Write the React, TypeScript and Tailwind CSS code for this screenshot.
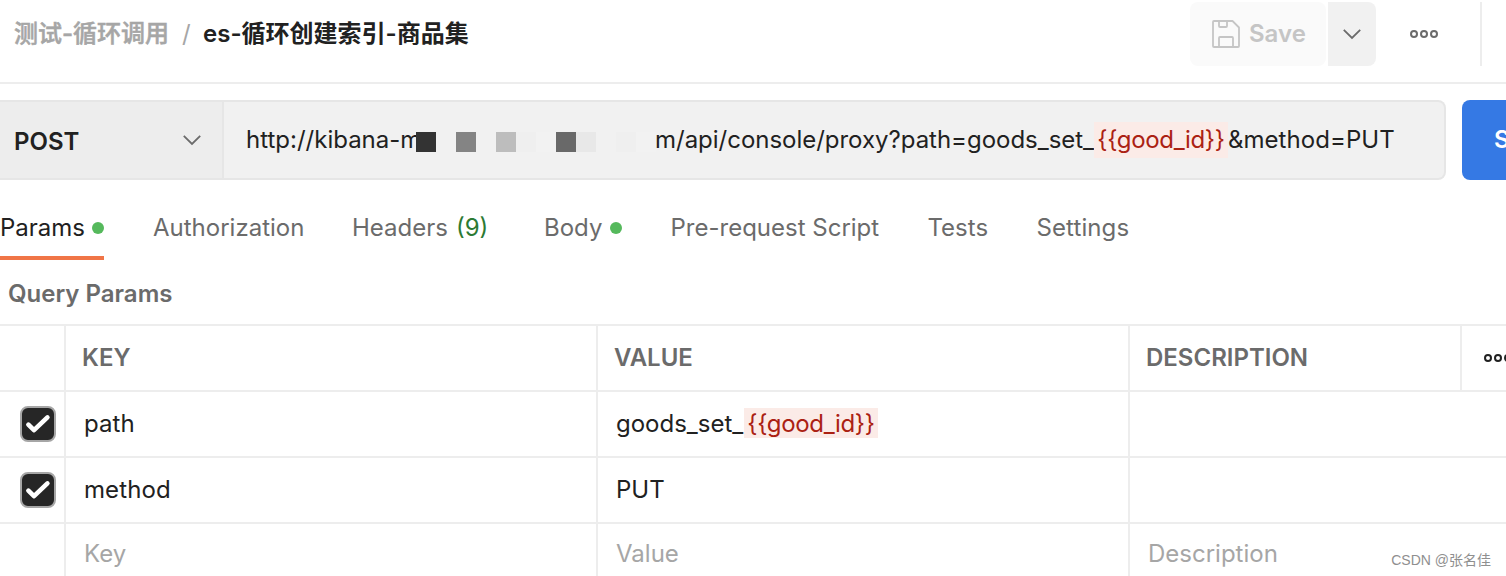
import clsx from 'clsx';

const tabs = [
  { label: 'Params', dot: true, active: true, className: 'w-[104px] mr-[49px]' },
  { label: 'Authorization', className: 'w-[151px] mr-[48px]' },
  { label: 'Headers', count: '(9)', className: 'w-[136px] mr-[56px]' },
  { label: 'Body', dot: true, className: 'w-[78px] mr-[48.5px]' },
  { label: 'Pre-request Script', className: 'w-[209px] mr-[48px]' },
  { label: 'Tests', className: 'w-[60px] mr-[49px]' },
  { label: 'Settings', className: 'w-[94px] tracking-[0.1px]' },
];

const maskedHost = [
  'bg-[#333333]', 'bg-[#f1f1f1]', 'bg-[#848484]', 'bg-[#f1f1f1]', 'bg-[#bdbdbd]', 'bg-[#efefef]',
  'bg-[#f2f2f2]', 'bg-[#696969]', 'bg-[#e8e8e8]', 'bg-[#f1f1f1]', 'bg-[#efefef]', 'bg-[#f2f2f2]',
];

function ChevronDown() {
  return (
    <svg width="20" height="12" viewBox="0 0 20 12" fill="none" stroke="#6b6b6b" strokeWidth="1.8">
      <path d="M1.8 1.8 10 10l8.2-8.2" />
    </svg>
  );
}

function Dots({ color }: { color: string }) {
  return (
    <svg className="shrink-0" width="28" height="8" viewBox="0 0 28 8" fill="none" stroke={color} strokeWidth="2">
      <circle cx="4" cy="4" r="3" />
      <circle cx="14" cy="4" r="3" />
      <circle cx="24" cy="4" r="3" />
    </svg>
  );
}

function SaveIcon() {
  return (
    <svg width="28" height="28" viewBox="0 0 28 28" fill="none" stroke="#c5c5c5" strokeWidth="1.8" strokeLinejoin="round">
      <path d="M2 1h18.5L27 7.5V26a1 1 0 0 1-1 1H2a1 1 0 0 1-1-1V2a1 1 0 0 1 1-1Z" />
      <path d="M7 1v5a1 1 0 0 0 1 1h6a1 1 0 0 0 1-1V1" />
      <path d="M7 27v-9a1 1 0 0 1 1-1h12a1 1 0 0 1 1 1v9" />
    </svg>
  );
}

function Checkbox() {
  return (
    <div className="ml-5 flex h-9 w-9 items-center justify-center rounded-[8px] border-2 border-[#a6a6a6] bg-[#262626]">
      <svg width="28" height="28" viewBox="0 0 28 28" fill="none" stroke="#fff" strokeWidth="4.6" strokeLinecap="round" strokeLinejoin="round">
        <path d="M4.4 14.6 10 20.2 23.4 7.4" />
      </svg>
    </div>
  );
}

function Row({ name, children }: { name: string, children: any }) {
  return (
    <div className="grid h-[66px] grid-cols-[66px_532px_532px_1fr] border-b-2 border-[#ededed]">
      <div className="flex items-center border-r-2 border-[#ededed]"><Checkbox /></div>
      <div className="flex items-center border-r-2 border-[#ededed] pl-[18px] tracking-[0.1px]">{name}</div>
      <div className="flex items-center border-r-2 border-[#ededed] pl-[18px]">{children}</div>
      <div />
    </div>
  );
}

export default function App() {
  return (
    <div className="relative flex h-[576px] w-[1506px] flex-col overflow-hidden bg-white font-['Inter','Noto_Sans_CJK_SC',sans-serif] text-[24px] leading-[36px] whitespace-pre text-[#212121]">
      <header className="flex h-[84px] shrink-0 items-start border-b-2 border-[#ededed] pl-[14px]">
        <div className="flex h-[68px] flex-1 items-center font-medium">
          <span className="w-[168px] text-[#a6a6a6] [-webkit-text-stroke:0.5px_#a6a6a6]">测试-循环调用</span>
          <span className="w-[21px] font-normal text-[#a6a6a6]">/</span>
          <span className="font-semibold">es-循环创建索引-商品集</span>
        </div>
        <div className="mt-[2px] flex h-16">
          <div className="mr-[2px] flex w-[136px] items-center gap-[9px] rounded-[8px] bg-[#fafafa] pl-[22px] font-semibold text-[#c5c5c5]">
            <SaveIcon />
            Save
          </div>
          <div className="flex w-12 items-center justify-center rounded-r-[8px] bg-[#f1f1f1]"><ChevronDown /></div>
          <div className="flex w-[106px] items-center border-r-2 border-[#ededed] pl-[34px]"><Dots color="#6b6b6b" /></div>
          <div className="w-6" />
        </div>
      </header>

      <div className="mt-4 flex h-20 shrink-0">
        <div className="flex w-[1446px] shrink-0 rounded-r-[8px] border-y-2 border-r-2 border-[#e6e6e6] bg-[#f1f1f1]">
          <div className="flex w-[224px] shrink-0 items-center justify-between border-r-2 border-[#e6e6e6] bg-[#ededed] pr-[20px] pl-[14px]">
            <span className="pt-[3px] font-semibold">POST</span>
            <ChevronDown />
          </div>
          <div className="flex items-center pl-[22px]">
            <span className="w-[170px] shrink-0">http://kibana-m</span>
            <div className="z-10 mt-1 flex w-[239px] shrink-0">
              {maskedHost.map((shade, i) => (
                <div key={i} className={clsx('h-5 w-5 shrink-0', shade)} />
              ))}
            </div>
            <span className="w-[439px] shrink-0 tracking-[-0.02px]">m/api/console/proxy?path=goods_set_</span>
            <span className="flex h-9 w-[134px] shrink-0 items-center justify-center bg-[#fbebe7] tracking-[-0.35px] text-[#ab2113]">{'{{good_id}}'}</span>
            <span className="shrink-0 tracking-[0.05px]">&method=PUT</span>
          </div>
        </div>
        <div className="ml-4 flex w-[120px] shrink-0 items-center rounded-[8px] bg-[#3579e4] pl-[32px] font-semibold text-white">Send</div>
      </div>

      <nav className="flex h-20 shrink-0 text-[#6b6b6b]">
        {tabs.map((tab) => (
          <div
            key={tab.label}
            className={clsx('flex shrink-0 items-center border-b-4 pt-5', tab.className, tab.active ? 'border-[#f07547] text-[#212121]' : 'border-transparent')}
          >
            {tab.label}
            {tab.count && <span className="ml-[8px] text-[#2c7a33]">{tab.count}</span>}
            {tab.dot && <span className="ml-auto h-3 w-3 rounded-full bg-[#55b95c]" />}
          </div>
        ))}
      </nav>

      <div className="flex h-16 shrink-0 items-center pt-1 pl-2 font-semibold text-[#6b6b6b]">Query Params</div>

      <div className="flex-1 border-t-2 border-[#ededed]">
        <div className="grid h-[66px] grid-cols-[66px_532px_532px_332px_1fr] border-b-2 border-[#ededed] font-semibold text-[#6b6b6b]">
          <div className="border-r-2 border-[#ededed]" />
          <div className="flex items-center border-r-2 border-[#ededed] pl-4">KEY</div>
          <div className="flex items-center border-r-2 border-[#ededed] pl-4">VALUE</div>
          <div className="flex items-center border-r-2 border-[#ededed] pl-4">DESCRIPTION</div>
          <div className="flex w-11 items-center overflow-hidden pl-[22px]"><Dots color="#212121" /></div>
        </div>
        <Row name="path">
          <span className="w-[128px]">goods_set_</span>
          <span className="mb-[2px] flex h-[30px] w-[134px] items-center justify-center bg-[#fbebe7] pt-[2px] tracking-[-0.35px] text-[#ab2113]">{'{{good_id}}'}</span>
        </Row>
        <Row name="method">PUT</Row>
        <div className="grid h-[66px] grid-cols-[66px_532px_532px_1fr] text-[#a6a6a6]">
          <div className="border-r-2 border-[#ededed]" />
          <div className="border-r-2 border-[#ededed] pt-3 pl-[18px]">Key</div>
          <div className="border-r-2 border-[#ededed] pt-3 pl-[18px]">Value</div>
          <div className="pt-3 pl-[18px]">Description</div>
        </div>
      </div>

      <div className="absolute right-[15px] bottom-[6px] font-['Liberation_Sans','Noto_Sans_CJK_SC',sans-serif] text-[14px] leading-5 text-[#8f8f8f]">CSDN @张名佳</div>
    </div>
  );
}
